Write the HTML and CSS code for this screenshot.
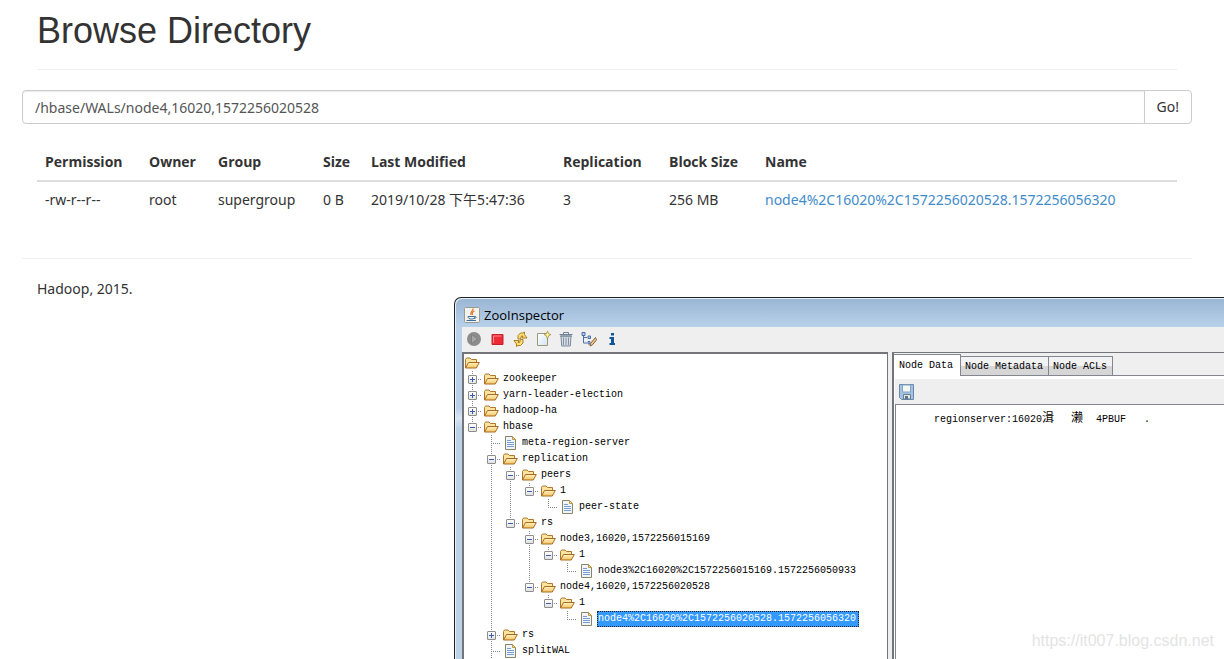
FILE: index.html
```html
<!DOCTYPE html>
<html lang="en">
<head>
<meta charset="utf-8">
<title>Browse Directory</title>
<link rel="stylesheet" href="styles.css">
</head>
<body>
<svg class="sprite" aria-hidden="true">
  <defs>
    <linearGradient id="gold" x1="0" y1="0" x2="0" y2="1"><stop offset="0" stop-color="#fff3c4"/><stop offset="1" stop-color="#f3c45f"/></linearGradient>
    <linearGradient id="sheet" x1="0" y1="0" x2="1" y2="1"><stop offset="0" stop-color="#fff"/><stop offset="1" stop-color="#d3e4f6"/></linearGradient>
    <symbol id="folder" viewBox="0 0 16 16">
      <path d="M1.5 13V4.5l1-1.5h3.500l1.500 1.500h5v3" fill="#fbe3a0" stroke="#b0762b"/>
      <path d="M1.500 13l3-5.500h10.800l-3 5.500z" fill="url(#gold)" stroke="#a86a20" stroke-linejoin="round"/>
    </symbol>
    <symbol id="doc" viewBox="0 0 16 16">
      <path d="M2.500 1.500h7l3 3v10h-10z" fill="#eef5fd" stroke="#8a8560"/>
      <path d="M9.500 1.500v3h3z" fill="#f1d88c" stroke="#b99a4c"/>
      <path d="M4 5.500h4M4 7.500h7M4 9.500h7M4 11.500h7" stroke="#7a9cce"/>
    </symbol>
  </defs>
</svg>
<main class="page">
  <header class="page-header"><h1>Browse Directory</h1></header>
  <form class="path-form">
    <input class="path-input" type="text" aria-label="Directory path" value="/hbase/WALs/node4,16020,1572256020528">
    <button class="go" type="button">Go!</button>
  </form>
  <div class="listing">
    <table>
      <thead><tr><th class="c-perm">Permission</th><th class="c-owner">Owner</th><th class="c-group">Group</th><th class="c-size">Size</th><th class="c-mod">Last Modified</th><th class="c-rep">Replication</th><th class="c-block">Block Size</th><th>Name</th></tr></thead>
      <tbody><tr><td>-rw-r--r--</td><td>root</td><td>supergroup</td><td>0 B</td><td>2019/10/28 下午5:47:36</td><td>3</td><td>256 MB</td><td><a href="#">node4%2C16020%2C1572256020528.1572256056320</a></td></tr></tbody>
    </table>
  </div>
  <footer class="page-footer">Hadoop, 2015.</footer>
</main>

<section class="window" aria-label="ZooInspector">
  <div class="titlebar">
    <svg class="icon" viewBox="0 0 16 16"><rect x=".5" y=".5" width="15" height="15" rx="1" fill="#f2f2ee" stroke="#9a9a94"/><path d="M9 1.500C9.500 4 5.500 4.500 7 8M10.500 4C8 5 7.800 6 8.500 8" fill="none" stroke="#e57424" stroke-width="1.200"/><path d="M4 9.500h6.500c0 2-1 2.500-3 2.500S4 11.500 4 9.500zM2.500 13.500h9.500M10.500 9.500c2.500-.500 2 2-.500 2" fill="none" stroke="#3f6d9a"/></svg>
    <span>ZooInspector</span>
  </div>
  <div class="client">
    <div class="toolbar">
      <button type="button" aria-label="Connect"><svg class="icon" viewBox="0 0 16 16"><circle cx="8" cy="8" r="7" fill="#8c8c8c"/><path d="M5.500 3.500l6 4.500-6 4.500z" fill="#a6a6a6" stroke="#777" stroke-width=".7"/></svg></button>
      <button type="button" aria-label="Disconnect"><svg class="icon" viewBox="0 0 16 16"><path d="M3 3.500h11v10H3z" fill="#ee2a36" stroke="#c3222c"/><path d="M4.500 12v-7h8" fill="none" stroke="#ff8a91"/></svg></button>
      <button type="button" aria-label="Refresh"><svg class="icon" viewBox="0 0 16 16"><path d="M6 8V4.500L8.500 2h2.500l1.500-1v2.500l2.500 3.500h-5l1-2h-1.500L8.500 8z" fill="#ffdc74" stroke="#a57414" stroke-linejoin="round" stroke-width=".9"/><path d="M11 8.500V12l-2.500 2.500H6L4.500 15.500V13L2 9.500h5l-1 2h1.500l1-3z" fill="#ffdc74" stroke="#a57414" stroke-linejoin="round" stroke-width=".9"/></svg></button>
      <button type="button" aria-label="Add node"><svg class="icon" viewBox="0 0 16 16"><path d="M2.500 2.500h10v12h-10z" fill="url(#sheet)" stroke="#9a9a76"/><path d="M12.500 0l1.200 2.800 2.300.700-2.300 1.200L12.500 8l-1.200-3.300L9 3.500l2.300-.700z" fill="#fff2a5" stroke="#a58422" stroke-width=".7"/></svg></button>
      <button type="button" aria-label="Delete node"><svg class="icon" viewBox="0 0 16 16"><path d="M3 5h10l-.700 10H3.700z" fill="#d5dce3" stroke="#7b8b9c"/><path d="M5.500 6.500V14M8 6.500V14M10.500 6.500V14" stroke="#8494a4"/><path d="M1.500 3.500h13M5.500 3V1.500h5V3M2 5h12" fill="none" stroke="#718296"/></svg></button>
      <button type="button" aria-label="Node viewers"><svg class="icon" viewBox="0 0 16 16"><path d="M1 1.500h3v3H1zM7 5h2.500v2.500H7zM7 10.500h2V13H7z" fill="#b9ccec" stroke="#4b6da8"/><path d="M2.500 5v7H6M3 6.500h3" fill="none" stroke="#4b6da8"/><path d="M14.500 6.500l-5 6-.500 2.500 2.500-1.200 4-5z" fill="#eec989" stroke="#806039"/></svg></button>
      <button type="button" aria-label="About"><svg class="icon" viewBox="0 0 16 16"><path d="M7 2h3v2.500H7zM5.500 6H10v6h1v2H5.500v-2H7V8H5.500z" fill="#12569a"/></svg></button>
    </div>
    <div class="split">
      <div class="tree-pane">
        <div class="tree-root"><svg class="icon"><use href="#folder"/></svg></div>
        <ul class="tree">
          <li><div class="row"><button type="button" class="toggle plus" aria-label="Expand"></button><svg class="icon"><use href="#folder"/></svg><span>zookeeper</span></div></li>
          <li><div class="row"><button type="button" class="toggle plus" aria-label="Expand"></button><svg class="icon"><use href="#folder"/></svg><span>yarn-leader-election</span></div></li>
          <li><div class="row"><button type="button" class="toggle plus" aria-label="Expand"></button><svg class="icon"><use href="#folder"/></svg><span>hadoop-ha</span></div></li>
          <li><div class="row"><button type="button" class="toggle" aria-label="Collapse"></button><svg class="icon"><use href="#folder"/></svg><span>hbase</span></div>
            <ul class="open-ended">
              <li><div class="row leaf"><svg class="icon"><use href="#doc"/></svg><span>meta-region-server</span></div></li>
              <li><div class="row"><button type="button" class="toggle" aria-label="Collapse"></button><svg class="icon"><use href="#folder"/></svg><span>replication</span></div>
                <ul>
                  <li><div class="row"><button type="button" class="toggle" aria-label="Collapse"></button><svg class="icon"><use href="#folder"/></svg><span>peers</span></div>
                    <ul><li><div class="row"><button type="button" class="toggle" aria-label="Collapse"></button><svg class="icon"><use href="#folder"/></svg><span>1</span></div>
                      <ul><li><div class="row leaf"><svg class="icon"><use href="#doc"/></svg><span>peer-state</span></div></li></ul></li></ul></li>
                  <li><div class="row"><button type="button" class="toggle" aria-label="Collapse"></button><svg class="icon"><use href="#folder"/></svg><span>rs</span></div>
                    <ul>
                      <li><div class="row"><button type="button" class="toggle" aria-label="Collapse"></button><svg class="icon"><use href="#folder"/></svg><span>node3,16020,1572256015169</span></div>
                        <ul><li><div class="row"><button type="button" class="toggle" aria-label="Collapse"></button><svg class="icon"><use href="#folder"/></svg><span>1</span></div>
                          <ul><li><div class="row leaf"><svg class="icon"><use href="#doc"/></svg><span>node3%2C16020%2C1572256015169.1572256050933</span></div></li></ul></li></ul></li>
                      <li><div class="row"><button type="button" class="toggle" aria-label="Collapse"></button><svg class="icon"><use href="#folder"/></svg><span>node4,16020,1572256020528</span></div>
                        <ul><li><div class="row"><button type="button" class="toggle" aria-label="Collapse"></button><svg class="icon"><use href="#folder"/></svg><span>1</span></div>
                          <ul><li><div class="row leaf"><svg class="icon"><use href="#doc"/></svg><span class="selected">node4%2C16020%2C1572256020528.1572256056320</span></div></li></ul></li></ul></li>
                    </ul></li>
                </ul></li>
              <li><div class="row"><button type="button" class="toggle plus" aria-label="Expand"></button><svg class="icon"><use href="#folder"/></svg><span>rs</span></div></li>
              <li><div class="row leaf"><svg class="icon"><use href="#doc"/></svg><span>splitWAL</span></div></li>
            </ul></li>
        </ul>
      </div>
      <div class="detail">
        <div class="tabs">
          <button type="button" class="tab active">Node Data</button>
          <button type="button" class="tab">Node Metadata</button>
          <button type="button" class="tab">Node ACLs</button>
        </div>
        <div class="tab-body">
          <div class="save-bar"><button type="button" aria-label="Save"><svg class="icon" viewBox="0 0 16 16"><path d="M.5.5h14v15h-12l-2-2z" fill="#a5c1e2" stroke="#6a88ae"/><path d="M3.500 1h8v7h-8z" fill="#f3f8f4" stroke="#86a4c0"/><path d="M4.500 10.500h7V15h-7z" fill="#e8ead8" stroke="#687f98"/><path d="M6 12h3v3H6z" fill="#5c7596"/></svg></button></div>
          <div class="node-data"><span>regionserver:16020</span><b>湒</b><b class="second">濑</b><span>4PBUF</span><span class="dot">.</span></div>
        </div>
      </div>
    </div>
  </div>
</section>
<div class="watermark">https://it007.blog.csdn.net</div>
</body>
</html>
```
FILE: styles.css
```css
* { box-sizing: border-box; }
body {
  margin: 0;
  position: relative;
  min-height: 100vh;
  overflow: hidden;
  background: #fff;
  color: #333;
  font: 14px/20px "Noto Sans", "Noto Sans CJK SC", sans-serif;
}
button { margin: 0; padding: 0; border: 0; background: none; font: inherit; color: inherit; }
.sprite { position: absolute; width: 0; height: 0; }
.icon { display: block; flex: none; width: 16px; height: 16px; }

/* Directory browser */
.page { padding: 0 32px 0 22px; }
.page-header { margin: 0 15px 20px; padding: 11px 0 18px; border-bottom: 1px solid #eee; }
h1 { margin: 0; font: 36px/40px "Liberation Sans", Arial, sans-serif; }
.path-form { display: flex; }
.path-input {
  flex: 1;
  min-width: 0;
  height: 34px;
  padding: 6px 12px;
  border: 1px solid #ccc;
  border-radius: 4px 0 0 4px;
  box-shadow: inset 0 1px 1px rgba(0, 0, 0, .08);
  background: #fff;
  color: #555;
  font: inherit;
}
.go { margin-left: -1px; padding: 6px 12px; border: 1px solid #ccc; border-radius: 0 4px 4px 0; background: #fff; }
.listing { padding: 20px 15px; }
table { width: 100%; border-collapse: separate; border-spacing: 0; table-layout: fixed; }
th, td { padding: 8px; text-align: left; white-space: nowrap; }
th { border-bottom: 2px solid #ddd; font-family: "Open Sans", sans-serif; font-weight: 700; }
.c-perm { width: 104px; }
.c-owner { width: 69px; }
.c-group { width: 105px; }
.c-size { width: 48px; }
.c-mod { width: 192px; }
.c-rep { width: 106px; }
.c-block { width: 96px; }
a { color: #428bca; text-decoration: none; }
.page-footer { margin-top: 20px; padding: 20px 15px; border-top: 1px solid #eee; }

/* Desktop window over the page */
.window {
  position: absolute;
  left: 454px;
  top: 297px;
  right: 0;
  bottom: 0;
  display: flex;
  flex-direction: column;
  overflow: hidden;
  padding-left: 7px;
  border: solid #222;
  border-width: 1px 0 0 1px;
  border-radius: 7px 0 0 0;
  background: linear-gradient(#9ab5d3, #b9d2eb 30px, #b9d0e8 110px, #d8e6f4 120px, #bcd2e9 130px);
  box-shadow: inset 1px 1px #e8f1fa;
  color: #000;
}
.titlebar {
  display: flex;
  align-items: center;
  gap: 4px;
  height: 29px;
  padding: 5px 0 0 2px;
  font: 13px/20px "Open Sans", sans-serif;
}
.client { flex: 1; min-height: 0; display: flex; flex-direction: column; background: #efefef; font: 10px/16px "Liberation Mono", "Noto Sans CJK SC", monospace; }
.toolbar { display: flex; gap: 7px; padding: 4px 4px 5px; }
.split { flex: 1; min-height: 0; display: flex; gap: 4px; }
.tree-pane {
  flex: none;
  width: 426px;
  overflow: hidden;
  padding-top: 1px;
  border: solid #73757b;
  border-width: 2px 1px 0 2px;
  background: #fff;
}
ul { margin: 0; padding: 0; list-style: none; }
ul ul { margin-left: 19px; }
.tree li {
  background: repeating-linear-gradient(#888 0 1px, transparent 1px 2px) 8px 0 / 1px 100% no-repeat;
}
.tree li:last-child { background-size: 1px 8px; }
.tree .open-ended > li:last-child { background-size: 1px 100%; }
.row {
  display: flex;
  align-items: center;
  height: 16px;
  padding-left: 4px;
  background: repeating-linear-gradient(90deg, #888 0 1px, transparent 1px 2px) 8px 8px / 10px 1px no-repeat;
}
.row.leaf { padding-left: 20px; }
.row span { margin-left: 3px; padding: 0 3px 0 1px; white-space: nowrap; }
.row.leaf span { margin-left: 2px; }
.toggle {
  width: 9px;
  height: 9px;
  margin-right: 6px;
  border: 1px solid #8c8c8c;
  border-radius: 1px;
  background: linear-gradient(#3c5eac, #3c5eac) center / 5px 1px no-repeat, linear-gradient(#fff, #e2e2e2);
}
.toggle.plus {
  background: linear-gradient(#3c5eac, #3c5eac) center / 5px 1px no-repeat, linear-gradient(#3c5eac, #3c5eac) center / 1px 5px no-repeat, linear-gradient(#fff, #e2e2e2);
}
.row .selected { background: #39f; color: #fff; outline: 1px dotted #202020; outline-offset: -1px; }

.detail { flex: 1; min-width: 0; display: flex; flex-direction: column; border: solid #73757b; border-width: 1px 0 0 2px; }
.tabs { display: flex; align-items: flex-end; height: 23px; box-shadow: inset 0 -1px #84868f; }
.tab { height: 20px; padding: 2px 5px 0 4px; border: 1px solid #84868f; border-left-width: 0; background: linear-gradient(#f2f2f2 50%, #d6d6d6 50%); }
.tab.active { height: 22px; padding: 0 7px 0 5px; border-bottom: 0; background: #fff; }
.tab-body { flex: 1; display: flex; flex-direction: column; padding: 3px 0 0 1px; background: #fff; }
.save-bar { display: flex; padding: 5px 4px 4px; background: #efefef; }
.node-data { flex: 1; display: flex; align-items: baseline; padding: 4px 0 0 38px; border: solid #84868f; border-width: 1px 0 0 1px; white-space: nowrap; }
.node-data b { margin-right: 17px; font: 12px/16px "Noto Sans CJK SC", sans-serif; color: #000; }
.node-data .second { margin-right: 13px; }
.dot { margin-left: 18px; }

.watermark {
  position: absolute;
  right: 10px;
  bottom: 8px;
  color: #e4e4e4;
  font: 16px/20px "Liberation Sans", Arial, sans-serif;
}
```
